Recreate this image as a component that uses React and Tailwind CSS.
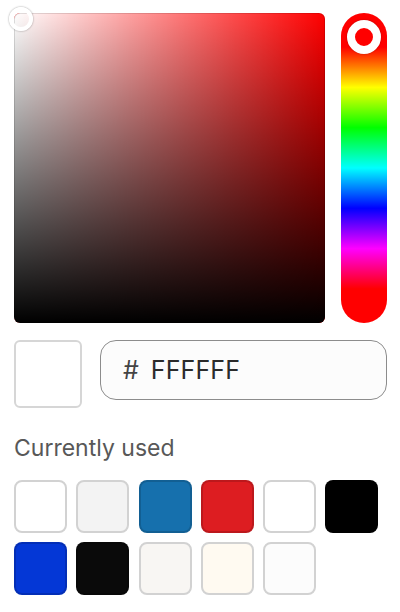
import React from "react";

const swatches = [
  { c: "#ffffff", light: true },
  { c: "#f3f3f3", light: true },
  { c: "#1670ad" },
  { c: "#dd1d21" },
  { c: "#ffffff", light: true },
  { c: "#000000" },
  { c: "#0437d6" },
  { c: "#0a0a0a" },
  { c: "#f8f6f3", light: true },
  { c: "#fffaf1", light: true },
  { c: "#fcfcfc", light: true },
];

export default function App() {
  return (
    <div
      className="w-[400px] h-[612px] bg-white pl-[14px] pt-[13px] overflow-hidden"
      style={{ fontFamily: "Inter, 'Noto Sans', sans-serif" }}
    >
      <div className="flex gap-[16px]">
        <div className="relative w-[311px] h-[310px] rounded-[6px] bg-[#ff0000]">
          <div className="absolute inset-0 rounded-[6px] bg-[linear-gradient(to_right,#ffffff,rgba(255,255,255,0))]" />
          <div className="absolute inset-0 rounded-[6px] bg-[linear-gradient(to_top,#000000,rgba(0,0,0,0))] shadow-[inset_0_0_0_1px_rgba(0,0,0,0.12)]" />
          <div className="absolute left-[-5px] top-[-6px] w-[24px] h-[24px] rounded-full border-[4px] border-white shadow-[0_0_2px_rgba(0,0,0,0.45)]" />
        </div>
        <div className="relative w-[46px] h-[310px] rounded-full bg-[linear-gradient(to_bottom,#ff0000_11%,#ffff00_24%,#00ff00_37%,#00ffff_50%,#0000ff_63%,#ff00ff_76%,#ff0000_89%)]">
          <div className="absolute left-[6px] top-[7px] w-[34px] h-[34px] rounded-full border-[8px] border-white bg-[#ff0000] shadow-[0_0_2px_rgba(0,0,0,0.3)]" />
        </div>
      </div>

      <div className="flex items-start mt-[17px] gap-[18px] w-[373px]">
        <div className="w-[68px] h-[68px] rounded-[6px] border-2 border-[#d6d6d6] bg-white" />
        <div className="flex-1 h-[60px] rounded-[16px] border border-[#8c8c8c] bg-[#fcfcfc] flex items-center pl-[22px]">
          <span className="text-[25px] leading-none text-[#444]">#</span>
          <span className="text-[25px] leading-none text-[#2b2b2b] ml-[12px] tracking-[0.1px]">FFFFFF</span>
        </div>
      </div>

      <div className="mt-[26px] text-[23px] leading-[28px] text-[#585858]">Currently used</div>

      <div className="mt-[18px] grid grid-cols-[repeat(6,53px)] gap-x-[9.3px] gap-y-[9px]">
        {swatches.map((s, i) => (
          <div
            key={i}
            className={
              "w-[53px] h-[53px] rounded-[8px] border-2 " +
              (s.light ? "border-[#d2d2d2]" : "border-black/15")
            }
            style={{ backgroundColor: s.c }}
          />
        ))}
      </div>
    </div>
  );
}
